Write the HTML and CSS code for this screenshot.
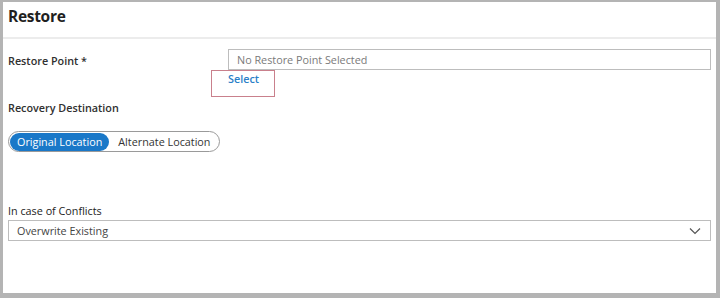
FILE: index.html
```html
<!DOCTYPE html>
<html>
<head>
<meta charset="utf-8">
<link rel="stylesheet" href="styles.css">
</head>
<body>
<div class="frame">
  <div class="panel">
    <header class="title-bar"><h1 class="title">Restore</h1></header>
    <div class="content">
      <div class="row-restore">
        <div class="label">Restore Point *</div>
        <div class="field-col">
          <div class="input">No Restore Point Selected</div>
          <div class="select-wrap"><span class="select-link">Select</span></div>
        </div>
      </div>
      <div class="label dest">Recovery Destination</div>
      <div class="toggle">
        <span class="opt active">Original Location</span>
        <span class="opt">Alternate Location</span>
      </div>
      <div class="label conflicts">In case of Conflicts</div>
      <div class="dropdown">
        <span>Overwrite Existing</span>
        <svg class="chev" width="12" height="8" viewBox="0 0 12 8"><path d="M1 1.5 L6 6.5 L11 1.5" fill="none" stroke="#555" stroke-width="1.2"/></svg>
      </div>
    </div>
  </div>
</div>
</body>
</html>
```

FILE: styles.css
```css
* { box-sizing: border-box; }
html, body { margin: 0; padding: 0; }
body {
  width: 720px;
  height: 298px;
  background: #b4b4b4;
  font-family: "Open Sans", "Noto Sans", sans-serif;
  color: #2b2b2b;
  overflow: hidden;
}
.frame {
  padding: 2px 4px 5px 3px;
  height: 298px;
}
.panel {
  background: #fff;
  height: 100%;
  display: flex;
  flex-direction: column;
}
.title-bar {
  height: 37px;
  border-bottom: 2px solid #ececec;
  padding: 3px 0 0 5px;
}
.title {
  margin: 0;
  font-size: 15.5px;
  font-weight: 700;
  color: #1f1f1f;
  letter-spacing: -0.3px;
}
.content {
  padding: 10px 5px 0 5px;
}
.row-restore {
  display: flex;
}
.label {
  font-size: 10.8px;
  font-weight: 600;
  color: #303030;
}
.row-restore .label {
  width: 220px;
  padding-top: 4px;
}
.field-col {
  flex: 1;
  display: flex;
  flex-direction: column;
}
.input {
  height: 21px;
  border: 1px solid #bdbdbd;
  padding: 2px 0 0 8px;
  font-size: 10.8px;
  color: #7a7a7a;
}
.select-wrap {
  margin-left: -17px;
  width: 64px;
  height: 27px;
  border: 1.5px solid #c9808c;
  padding: 0 0 0 16px;
}
.select-link {
  display: block;
  line-height: 14px;
  margin-top: 1px;
  font-size: 10.8px;
  font-weight: 600;
  color: #2a7fc8;
}
.dest { margin-top: 3px; }
.toggle {
  margin-top: 16px;
  display: inline-flex;
  align-items: center;
  border: 1px solid #9a9a9a;
  border-radius: 11px;
  height: 21px;
  padding: 0 8px 0 1px;
  gap: 9px;
}
.opt {
  font-size: 10.8px;
  color: #333;
}
.opt.active {
  background: #1a78c8;
  color: #fff;
  border-radius: 9px;
  padding: 1px 7px 2px 7px;
}
.label.conflicts {
  margin-top: 51px;
  font-weight: 400;
  color: #222;
}
.dropdown {
  margin-top: 2px;
  height: 21px;
  border: 1px solid #bdbdbd;
  display: flex;
  align-items: center;
  justify-content: space-between;
  padding: 0 9px 0 8px;
  font-size: 10.8px;
  color: #444;
}
.chev { display: block; }
```
